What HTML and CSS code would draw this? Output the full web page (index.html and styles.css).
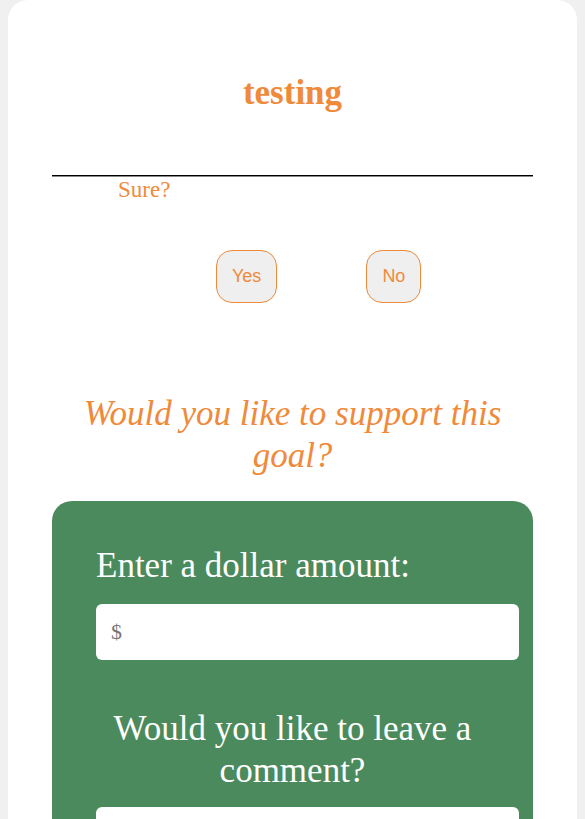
FILE: index.html
```html
<!DOCTYPE html>
<html lang="en">
<head>
<meta charset="utf-8">
<title>testing</title>
<link rel="stylesheet" href="styles.css">
</head>
<body>
<main class="card">
  <h1 class="title">testing</h1>
  <div class="rule"></div>
  <p class="sure">Sure?</p>
  <div class="choices">
    <button class="choice" type="button">Yes</button>
    <button class="choice" type="button">No</button>
  </div>
  <h2 class="support">Would you like to support this goal?</h2>
  <form class="donate">
    <label class="donate-label" for="amount">Enter a dollar amount:</label>
    <input class="field" id="amount" type="text" placeholder="$">
    <h3 class="comment-label">Would you like to leave a comment?</h3>
    <textarea class="field area"></textarea>
  </form>
</main>
</body>
</html>
```
FILE: styles.css
```css
html, body {
  background: #f0f0f0;
}
body {
  margin: 0 8px;
  font-family: "Liberation Serif", "Times New Roman", serif;
}
.card {
  background: #ffffff;
  border-radius: 20px;
  padding: 73px 44px 40px;
}
.title {
  margin: 0;
  font: 700 35px/40px "Liberation Serif", serif;
  color: #f08a3b;
  text-align: center;
}
.rule {
  margin-top: 62px;
  border-top: 1px solid #000;
  border-bottom: 1px solid #8a8a8a;
}
.sure {
  margin: 0 0 0 66px;
  font: 23px/26px "Liberation Serif", serif;
  color: #f08a3b;
}
.choices {
  display: flex;
  gap: 89px;
  margin-top: 47px;
  padding-left: 164px;
}
.choice {
  margin: 0;
  padding: 15px 15px;
  font: 18px/21px "Liberation Sans", Arial, sans-serif;
  color: #f08a3b;
  background: #efefef;
  border: 1px solid #f08a3b;
  border-radius: 16px;
}
.support {
  margin: 90px 0 0;
  font: italic 400 35px/42px "Liberation Serif", serif;
  color: #f08a3b;
  text-align: center;
}
.donate {
  margin-top: 24px;
  background: #4b8a5d;
  border-radius: 20px;
  padding: 44px 44px 40px;
}
.donate-label {
  display: block;
  font: 35px/42px "Liberation Serif", serif;
  color: #ffffff;
}
.field {
  display: block;
  box-sizing: content-box;
  width: 100%;
  height: 56px;
  margin: 17px 0 0;
  padding: 0 15px;
  border: 0;
  border-radius: 6px;
  background: #ffffff;
  font: 22px "Liberation Serif", serif;
  color: #333;
  outline: none;
}
.field::placeholder {
  color: #757575;
}
.comment-label {
  margin: 48px 0 0;
  font: 400 35px/42px "Liberation Serif", serif;
  color: #ffffff;
  text-align: center;
}
.area {
  margin-top: 15px;
  height: 100px;
  resize: none;
  padding-top: 10px;
}
```
